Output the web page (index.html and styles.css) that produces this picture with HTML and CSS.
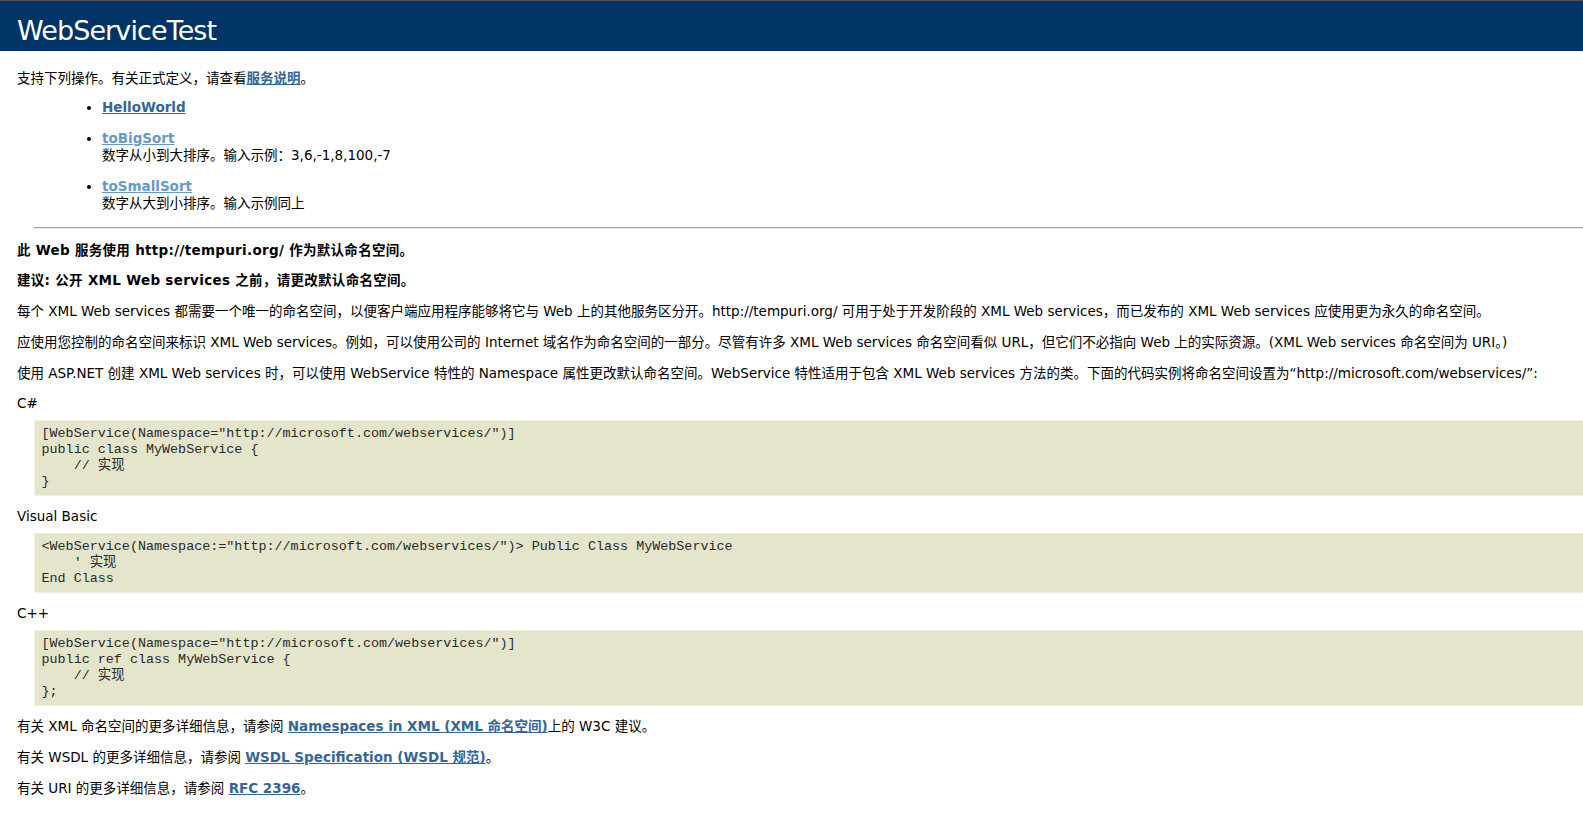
FILE: index.html
```html
<!DOCTYPE html>
<html lang="zh-CN">
<head>
<meta charset="utf-8">
<title>WebServiceTest Web 服务</title>
<link rel="stylesheet" href="styles.css">
</head>
<body>
<div class="page">
  <header class="heading1">WebServiceTest</header>
  <div class="content">
    <p class="intro">支持下列操作。有关正式定义，请查看<a class="link" href="#">服务说明</a>。</p>
    <ul class="ops">
      <li><a class="link" href="#">HelloWorld</a></li>
      <li><a class="link visited" href="#">toBigSort</a><br>数字从小到大排序。输入示例：3,6,-1,8,100,-7</li>
      <li><a class="link visited" href="#">toSmallSort</a><br>数字从大到小排序。输入示例同上</li>
    </ul>
    <hr class="rule">
    <p class="strong">此 Web 服务使用 http://tempuri.org/ 作为默认命名空间。</p>
    <p class="strong">建议: 公开 XML Web services 之前，请更改默认命名空间。</p>
    <p>每个 XML Web services 都需要一个唯一的命名空间，以便客户端应用程序能够将它与 Web 上的其他服务区分开。http://tempuri.org/ 可用于处于开发阶段的 XML Web services，而已发布的 XML Web services 应使用更为永久的命名空间。</p>
    <p>应使用您控制的命名空间来标识 XML Web services。例如，可以使用公司的 Internet 域名作为命名空间的一部分。尽管有许多 XML Web services 命名空间看似 URL，但它们不必指向 Web 上的实际资源。(XML Web services 命名空间为 URI。)</p>
    <p>使用 ASP.NET 创建 XML Web services 时，可以使用 WebService 特性的 Namespace 属性更改默认命名空间。WebService 特性适用于包含 XML Web services 方法的类。下面的代码实例将命名空间设置为“http://microsoft.com/webservices/”:</p>
    <p>C#</p>
<pre class="code">[WebService(Namespace="http://microsoft.com/webservices/")]
public class MyWebService {
    // 实现
}</pre>
    <p>Visual Basic</p>
<pre class="code">&lt;WebService(Namespace:="http://microsoft.com/webservices/")&gt; Public Class MyWebService
    ' 实现
End Class</pre>
    <p>C++</p>
<pre class="code">[WebService(Namespace="http://microsoft.com/webservices/")]
public ref class MyWebService {
    // 实现
};</pre>
    <p>有关 XML 命名空间的更多详细信息，请参阅 <a class="link" href="#">Namespaces in XML (XML 命名空间)</a>上的 W3C 建议。</p>
    <p>有关 WSDL 的更多详细信息，请参阅 <a class="link" href="#">WSDL Specification (WSDL 规范)</a>。</p>
    <p>有关 URI 的更多详细信息，请参阅 <a class="link" href="#">RFC 2396</a>。</p>
  </div>
</div>
</body>
</html>
```

FILE: styles.css
```css
html, body {
  margin: 0;
  padding: 0;
  background: #ffffff;
}

body {
  color: #000000;
  font-family: "DejaVu Sans", "Noto Sans CJK SC", sans-serif;
  font-size: 13.5px;
  overflow: hidden;
}

.page {
  overflow: hidden;
}

.heading1 {
  border-top: 1px solid #555555;
  background-color: #003366;
  color: #ffffff;
  font-family: "DejaVu Sans", "Noto Sans CJK SC", sans-serif;
  font-size: 27px;
  letter-spacing: -0.9px;
  line-height: 32px;
  padding: 14px 0 4px 17px;
}

.content {
  padding-left: 17px;
}

p {
  margin: 0 0 13.8px 0;
  line-height: 17px;
}

.intro {
  margin: 19px 0 0 0;
}

.strong {
  font-weight: bold;
  letter-spacing: 0.3px;
}

.link {
  color: #336699;
  font-weight: bold;
  text-decoration: underline;
}

.link.visited {
  color: #6699cc;
}

.ops {
  margin: 0;
  padding-left: 85px;
  line-height: 17px;
}

.ops li {
  margin-top: 14px;
}

.ops li:first-child {
  margin-top: 12px;
}

.rule {
  margin: 15px -20px 12.5px 17px;
  height: 0;
  border: 0;
  border-top: 1px solid #a0a0a0;
  border-bottom: 1px solid #eeeeee;
}

.code {
  margin: -6.3px -20px 12.5px 17px;
  padding: 5px 6.5px;
  background-color: #e5e5cc;
  border: 1px solid #f0f0e0;
  font-family: "Liberation Mono", "Noto Sans CJK SC", monospace;
  font-size: 13.4px;
  line-height: 16px;
  color: #2a2a2a;
}
```
